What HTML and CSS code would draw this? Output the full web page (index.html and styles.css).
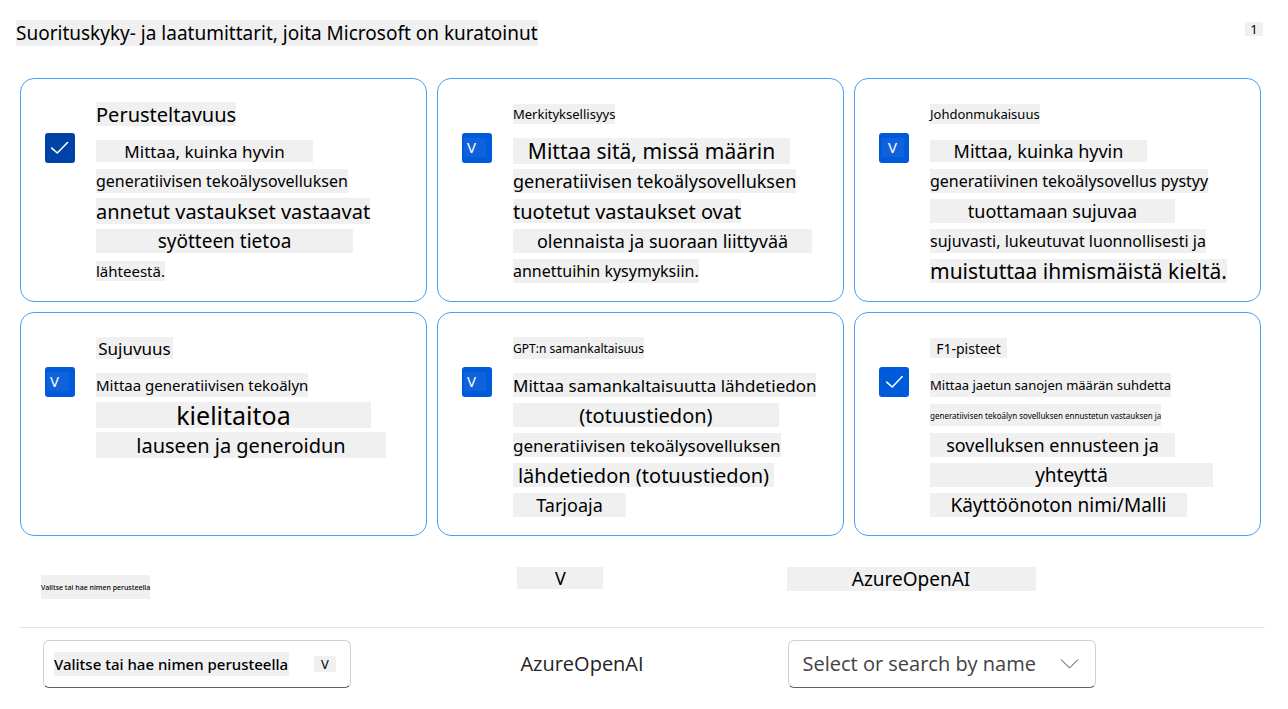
FILE: index.html
```html
<!DOCTYPE html>
<html lang="fi">
<head>
<meta charset="utf-8">
<meta name="viewport" content="width=device-width, initial-scale=1">
<title>Suorituskyky- ja laatumittarit</title>
<link rel="stylesheet" href="styles.css">
</head>
<body>
<header class="page-head">
  <h1 class="chip chip-26 t-19">Suorituskyky- ja laatumittarit, joita Microsoft on kuratoinut</h1>
  <span class="chip page-count t-13">1</span>
</header>

<main>
  <section class="cards">
    <article class="card">
      <div class="check check-dark">
        <input type="checkbox" id="m1" checked>
        <svg class="tick" viewBox="0 0 30 30" aria-hidden="true"><path d="M6.700 15.200L12.300 20L22.500 9.500"/></svg>
      </div>
      <div class="text">
        <h2 class="title"><label for="m1" class="chip t-20">Perusteltavuus</label></h2>
        <p class="line"><span class="chip chip-22 w-217 t-17">Mittaa, kuinka hyvin</span></p>
        <p class="line"><span class="chip t-16">generatiivisen tekoälysovelluksen</span></p>
        <p class="line"><span class="chip chip-26 t-20">annetut vastaukset vastaavat</span></p>
        <p class="line"><span class="chip w-257 t-19">syötteen tietoa</span></p>
        <p class="line"><span class="chip chip-20 t-15">lähteestä.</span></p>
      </div>
    </article>

    <article class="card">
      <div class="check">
        <input type="checkbox" id="m2" checked>
        <span class="mark t-15">V</span>
      </div>
      <div class="text">
        <h2 class="title"><label for="m2" class="chip chip-20 t-13">Merkityksellisyys</label></h2>
        <p class="line"><span class="chip chip-26 w-277 t-21">Mittaa sitä, missä määrin</span></p>
        <p class="line"><span class="chip t-18">generatiivisen tekoälysovelluksen</span></p>
        <p class="line"><span class="chip t-20">tuotetut vastaukset ovat</span></p>
        <p class="line"><span class="chip w-299 t-18">olennaista ja suoraan liittyvää</span></p>
        <p class="line"><span class="chip t-16">annettuihin kysymyksiin.</span></p>
      </div>
    </article>

    <article class="card">
      <div class="check">
        <input type="checkbox" id="m3" checked>
        <span class="mark mark-inset t-15">V</span>
      </div>
      <div class="text">
        <h2 class="title"><label for="m3" class="chip chip-20 t-13">Johdonmukaisuus</label></h2>
        <p class="line"><span class="chip chip-22 w-217 t-18">Mittaa, kuinka hyvin</span></p>
        <p class="line"><span class="chip t-16">generatiivinen tekoälysovellus pystyy</span></p>
        <p class="line"><span class="chip w-245 t-18">tuottamaan sujuvaa</span></p>
        <p class="line"><span class="chip t-16">sujuvasti, lukeutuvat luonnollisesti ja</span></p>
        <p class="line"><span class="chip t-21">muistuttaa ihmismäistä kieltä.</span></p>
      </div>
    </article>

    <article class="card">
      <div class="check">
        <input type="checkbox" id="m4" checked>
        <span class="mark t-15">V</span>
      </div>
      <div class="text">
        <h2 class="title"><label for="m4" class="chip chip-22 w-77 t-17">Sujuvuus</label></h2>
        <p class="line"><span class="chip t-15">Mittaa generatiivisen tekoälyn</span></p>
        <p class="line"><span class="chip chip-26 w-275 t-25">kielitaitoa</span></p>
        <p class="line"><span class="chip chip-26 w-290 t-20">lauseen ja generoidun</span></p>
      </div>
    </article>

    <article class="card">
      <div class="check">
        <input type="checkbox" id="m5" checked>
        <span class="mark t-15">V</span>
      </div>
      <div class="text">
        <h2 class="title"><label for="m5" class="chip chip-22 t-12">GPT:n samankaltaisuus</label></h2>
        <p class="line"><span class="chip t-17">Mittaa samankaltaisuutta lähdetiedon</span></p>
        <p class="line"><span class="chip w-266 t-20">(totuustiedon)</span></p>
        <p class="line"><span class="chip t-17">generatiivisen tekoälysovelluksen</span></p>
        <p class="line"><span class="chip w-261 t-20">lähdetiedon (totuustiedon)</span></p>
        <p class="line"><span class="chip w-113 t-18">Tarjoaja</span></p>
      </div>
    </article>

    <article class="card">
      <div class="check">
        <input type="checkbox" id="m6" checked>
        <svg class="tick" viewBox="0 0 30 30" aria-hidden="true"><path d="M7.700 15.200L13.300 20L23.200 9.500"/></svg>
      </div>
      <div class="text">
        <h2 class="title"><label for="m6" class="chip chip-20 w-77 t-14">F1-pisteet</label></h2>
        <p class="line"><span class="chip t-13">Mittaa jaetun sanojen määrän suhdetta</span></p>
        <p class="line"><span class="chip chip-22 t-8">generatiivisen tekoälyn sovelluksen ennustetun vastauksen ja</span></p>
        <p class="line"><span class="chip w-245 t-18">sovelluksen ennusteen ja</span></p>
        <p class="line"><span class="chip w-283 t-19">yhteyttä</span></p>
        <p class="line"><span class="chip w-257 t-19">Käyttöönoton nimi/Malli</span></p>
      </div>
    </article>
  </section>

  <table class="models">
    <colgroup><col class="col-name"><col class="col-provider"><col></colgroup>
    <thead>
      <tr>
        <th scope="col" class="name-head"><span class="chip t-7 medium">Valitse tai hae nimen perusteella</span></th>
        <th scope="col"><span class="chip chip-22 w-86 t-18">V</span></th>
        <th scope="col"><span class="chip w-249 t-19">AzureOpenAI</span></th>
      </tr>
    </thead>
    <tbody>
      <tr>
        <td>
          <div class="field field-chip">
            <select class="t-15 medium" aria-label="Valitse tai hae nimen perusteella"><option>Valitse tai hae nimen perusteella</option></select>
            <span class="chip field-mark t-13" aria-hidden="true">V</span>
          </div>
        </td>
        <td class="provider t-20">AzureOpenAI</td>
        <td>
          <div class="field">
            <select class="t-20" aria-label="Select or search by name"><option>Select or search by name</option></select>
            <svg class="chevron" viewBox="0 0 20 12" aria-hidden="true"><path d="M1 1.500L9.500 10L18 1.500"/></svg>
          </div>
        </td>
      </tr>
    </tbody>
  </table>
</main>
</body>
</html>
```
FILE: styles.css
```css
* { box-sizing: border-box; }

body {
  margin: 0;
  background: #fff;
  color: #000;
  font-family: "Noto Sans", "Open Sans", sans-serif;
}

h1, h2, p { margin: 0; font-weight: 400; }

/* type scale */
.t-7 { font-size: 7px; }
.t-8 { font-size: 8px; }
.t-12 { font-size: 12px; }
.t-13 { font-size: 13px; }
.t-14 { font-size: 14px; }
.t-15 { font-size: 15px; }
.t-16 { font-size: 16px; }
.t-17 { font-size: 17px; }
.t-18 { font-size: 18px; }
.t-19 { font-size: 19px; }
.t-20 { font-size: 20px; }
.t-21 { font-size: 21px; }
.t-25 { font-size: 25px; }
.medium { font-weight: 500; }

/* highlighted text */
.chip {
  display: inline-flex;
  align-items: center;
  justify-content: center;
  height: 24px;
  background: #f0f0f0;
  white-space: nowrap;
}
.chip-20 { height: 20px; }
.chip-22 { height: 22px; }
.chip-26 { height: 26px; }
.w-77 { min-width: 77px; }
.w-86 { min-width: 86px; }
.w-113 { min-width: 113px; }
.w-217 { min-width: 217px; }
.w-245 { min-width: 245px; }
.w-249 { min-width: 249px; }
.w-257 { min-width: 257px; }
.w-261 { min-width: 261px; }
.w-266 { min-width: 266px; }
.w-275 { min-width: 275px; }
.w-277 { min-width: 277px; }
.w-283 { min-width: 283px; }
.w-290 { min-width: 290px; }
.w-299 { min-width: 299px; }

.page-head {
  display: flex;
  justify-content: space-between;
  align-items: flex-start;
  padding: 20px 25px 32px 16px;
}
.page-count { width: 18px; height: 14px; margin-top: 2px; }

.cards {
  display: grid;
  grid-template-columns: repeat(3, 1fr);
  gap: 10px;
  padding: 0 27px 0 20px;
}
.card {
  display: flex;
  gap: 21px;
  min-height: 224px;
  padding: 23px 0 14px 24px;
  border: 1px solid #479ef5;
  border-radius: 14px;
}
.title { display: flex; align-items: center; height: 24px; margin-bottom: 10px; }
.line { display: flex; align-items: center; height: 30px; }

.check {
  display: grid;
  flex: none;
  width: 30px;
  height: 30px;
  margin-top: 31px;
}
.check > * { grid-area: 1 / 1; }
.check input {
  appearance: none;
  width: 30px;
  height: 30px;
  margin: 0;
  border-radius: 3px;
  background: #005bdb;
}
.check-dark input { background: #0043a6; }
.tick, .mark { pointer-events: none; }
.tick { fill: none; stroke: #fff; stroke-width: 1.6; stroke-linecap: round; }
.mark {
  width: 22px;
  height: 19px;
  margin: 5px 0 0 2px;
  padding-left: 3px;
  background: #0f62dc;
  color: #fff;
  line-height: 18px;
}
.mark-inset { padding-left: 6px; margin-left: 3px; }

.models {
  width: calc(100% - 42px);
  margin: 31px 23px 0 19px;
  border-collapse: collapse;
  table-layout: fixed;
}
.col-name { width: 40%; }
.col-provider { width: 21.6%; }
.models th {
  height: 60px;
  padding: 0;
  border-bottom: 1px solid #e6e6e6;
  font-weight: 400;
  text-align: left;
  vertical-align: top;
}
.models th .chip { display: flex; width: max-content; }
.models th.name-head { padding: 8px 0 0 22px; }
.models td { padding: 12px 0 0; }
.models td:first-child { padding-left: 24px; }
.models td:last-child { padding-left: 1px; }
.models td.provider {
  padding: 12px 0 0 3px;
  color: #242424;
  font-family: "Open Sans", "Noto Sans", sans-serif;
}

.field {
  display: flex;
  align-items: center;
  justify-content: space-between;
  width: 308px;
  height: 48px;
  padding: 0 15px 0 14px;
  border: 1px solid #d1d1d1;
  border-bottom-color: #616161;
  border-radius: 6px;
}
.field select {
  appearance: none;
  padding: 0;
  border: 0;
  background: transparent;
  color: #424242;
  font-family: "Open Sans", "Noto Sans", sans-serif;
}
.field-chip { padding: 0 14px 0 10px; }
.field-chip select {
  height: 24px;
  background: #f0f0f0;
  color: #000;
  font-family: inherit;
}
.field-mark { width: 22px; height: 16px; }
.chevron { width: 20px; height: 12px; fill: none; stroke: #424242; stroke-width: 1; }
```
